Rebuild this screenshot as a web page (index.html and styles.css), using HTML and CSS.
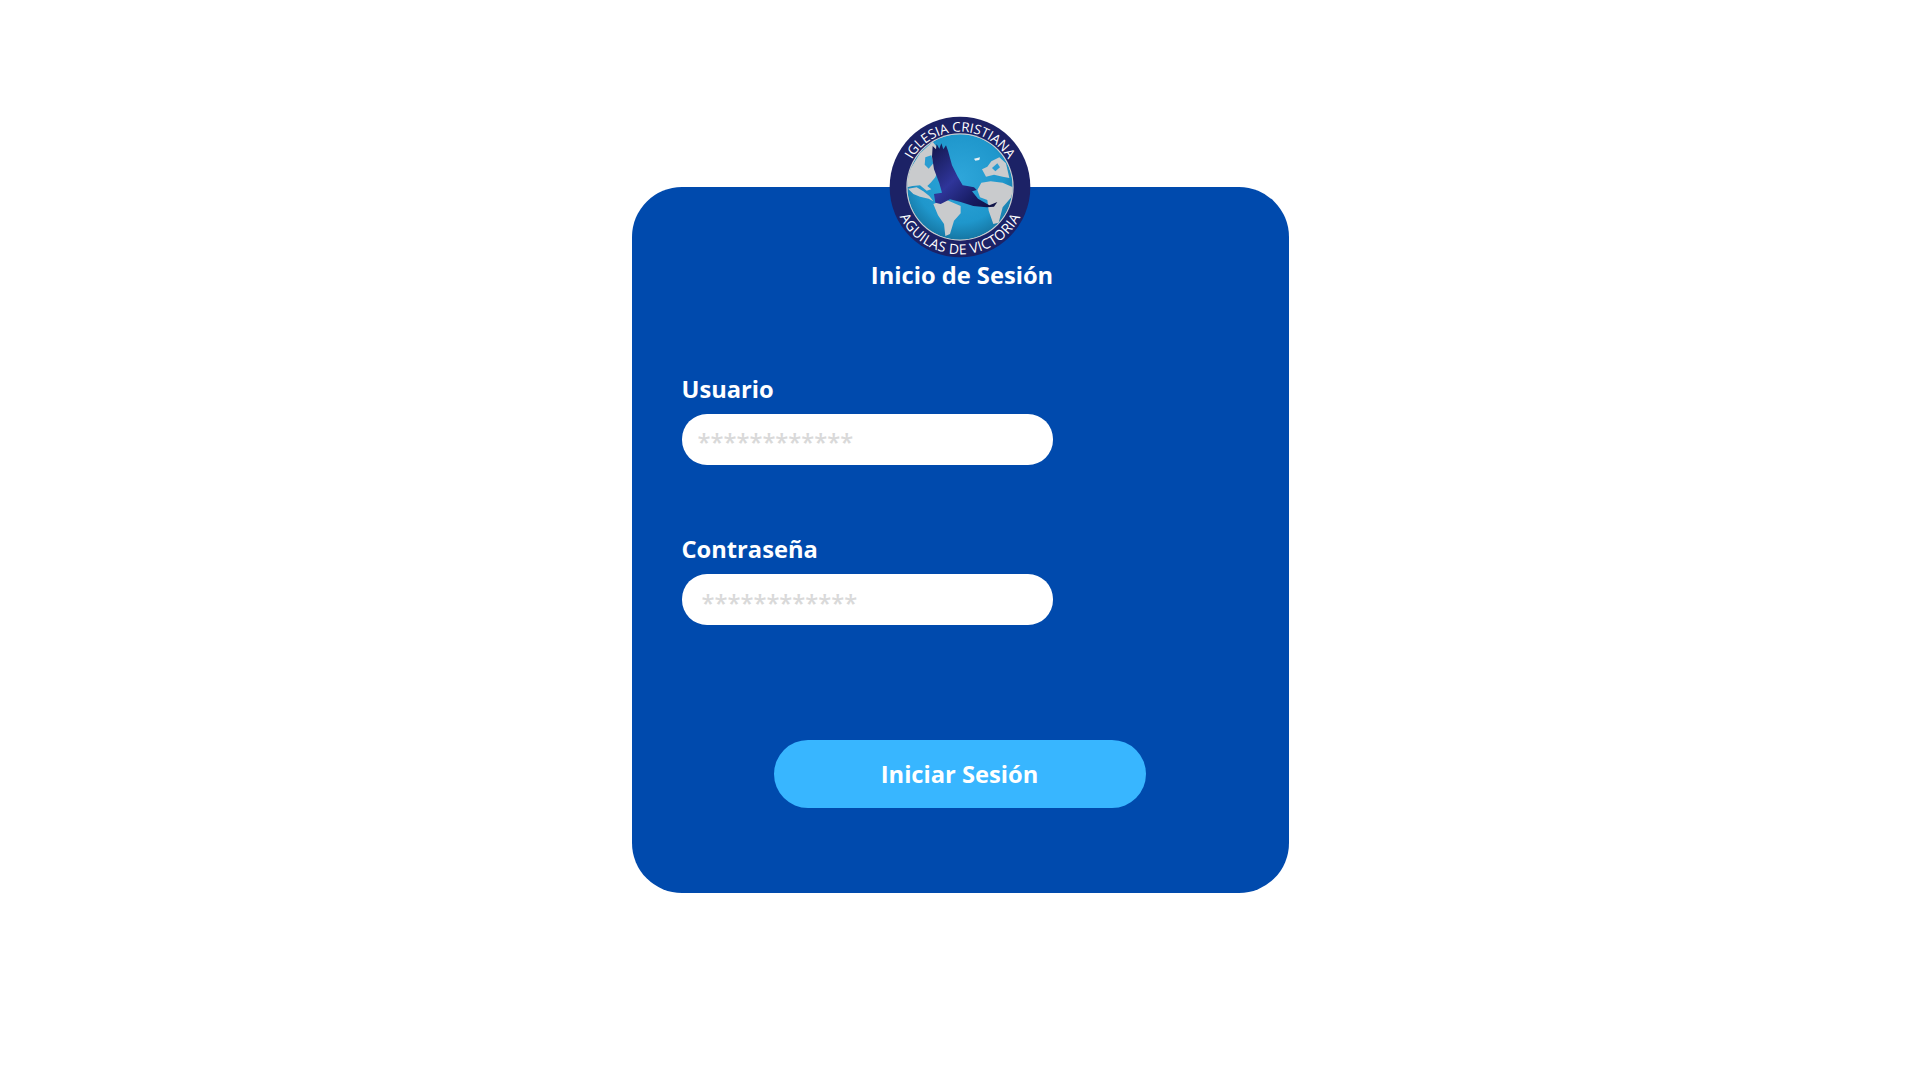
FILE: index.html
```html
<!DOCTYPE html>
<html lang="es">
<head>
<meta charset="utf-8">
<title>Inicio de Sesión</title>
<link rel="stylesheet" href="styles.css">
</head>
<body>
<main class="card">
  <svg class="logo" viewBox="57 48 426 426" aria-label="Iglesia Cristiana Águilas de Victoria">
    <defs>
      <radialGradient id="ocean" cx="0.5" cy="0.42" r="0.6">
        <stop offset="0" stop-color="#2ea6da"/>
        <stop offset="0.7" stop-color="#1f97cc"/>
        <stop offset="1" stop-color="#15739f"/>
      </radialGradient>
      <linearGradient id="eagle" x1="0" y1="0" x2="1" y2="1">
        <stop offset="0" stop-color="#12164a"/>
        <stop offset="0.45" stop-color="#2f359a"/>
        <stop offset="0.75" stop-color="#171c62"/>
        <stop offset="1" stop-color="#0e1240"/>
      </linearGradient>
      <path id="arcTop" d="M 104 261 A 166 166 0 0 1 436 261"/>
      <path id="arcBottom" d="M 68 261 A 202 202 0 0 0 472 261"/>
      <clipPath id="globe"><circle cx="270" cy="261" r="158"/></clipPath>
    </defs>
    <circle cx="270" cy="261" r="211" fill="#1c2266"/>
    <circle cx="270" cy="261" r="161" fill="#c9ccd0"/>
    <g clip-path="url(#globe)">
      <circle cx="270" cy="261" r="158" fill="url(#ocean)"/>
      <path class="land" d="M108 232 L122 205 L150 160 L188 125 L200 140 L206 205 L196 232 L182 248 L172 258 L184 268 L170 272 L150 256 L128 258 L108 262 Z"/>
      <path class="sea" d="M166 172 L184 166 L190 190 L176 206 L164 194 Z"/>
      <path class="land" d="M114 266 L140 262 L160 274 L178 288 L190 304 L176 296 L150 290 L130 282 Z"/>
      <path class="land" d="M190 312 L225 298 L272 318 L272 340 L252 362 L240 402 L226 408 L222 372 L204 346 Z"/>
      <path class="land" d="M322 270 L334 248 L362 244 L398 248 L430 262 L424 292 L398 322 L386 368 L370 372 L356 332 L352 300 L330 292 Z"/>
      <path class="land" d="M336 208 L352 200 L364 184 L388 172 L408 190 L418 234 L398 230 L372 224 L348 230 Z"/>
      <path class="sea" d="M366 204 L382 190 L390 202 L376 214 Z"/>
      <path class="ice" d="M312 176 L330 172 L328 180 L316 182 Z"/>
      <path class="eagle" d="M188 138 L198 148 L200 132 L208 146 L214 130 L220 148 L228 136 L234 152 L246 196 L262 228 L278 256 L292 258 L312 262 L320 270 L306 274 L324 296 L358 316 L382 306 L372 320 L350 322 L310 318 L272 306 L240 298 L212 312 L196 308 L192 282 L216 278 L208 250 L192 208 L186 170 Z"/>
    </g>
    <text class="ring-text ring-top"><textPath href="#arcTop" startOffset="50%" text-anchor="middle">IGLESIA CRISTIANA</textPath></text>
    <text class="ring-text ring-bottom"><textPath href="#arcBottom" startOffset="50%" text-anchor="middle">AGUILAS DE VICTORIA</textPath></text>
  </svg>
  <h1 class="title">Inicio de Sesión</h1>
  <form class="form">
    <div class="field">
      <label class="label" for="usuario">Usuario</label>
      <input class="input" id="usuario" type="text" placeholder="************">
    </div>
    <div class="field field-second">
      <label class="label" for="clave">Contraseña</label>
      <input class="input input-second" id="clave" type="text" placeholder="************">
    </div>
    <button class="submit" type="button">Iniciar Sesión</button>
  </form>
</main>
</body>
</html>
```
FILE: styles.css
```css
* { box-sizing: border-box; }
html, body { height: 100%; }
body {
  margin: 0;
  background: #fff;
  display: flex;
  align-items: center;
  justify-content: center;
  font-family: "Open Sans", "Liberation Sans", sans-serif;
}
.card {
  width: 657px;
  height: 706px;
  background: #004aad;
  border-radius: 50px;
  display: flex;
  flex-direction: column;
  color: #fff;
}
.logo {
  display: block;
  flex: none;
  width: 142px;
  height: 142px;
  margin: -71px auto 0;
}
.land { fill: #c9cbcd; }
.sea { fill: #2a9dd2; }
.ice { fill: #e8f0f4; }
.eagle { fill: url(#eagle); }
.ring-text { font-family: "Open Sans", sans-serif; font-weight: 500; fill: #fff; }
.ring-top { font-size: 40px; }
.ring-bottom { font-size: 42px; letter-spacing: 1px; }
.title {
  margin: 1px 0 0 4px;
  font-size: 23.7px;
  line-height: 32px;
  font-weight: 700;
  text-align: center;
}
.form {
  display: flex;
  flex-direction: column;
  padding: 82px 0 0 50px;
}
.field { display: flex; flex-direction: column; width: 371px; }
.field-second { margin-top: 68px; }
.label {
  font-size: 23.7px;
  line-height: 32px;
  font-weight: 700;
  margin-bottom: 9px;
}
.input {
  height: 51px;
  border: 0;
  border-radius: 25px;
  padding: 4px 16px 0;
  background: #fff;
  font: 600 23.7px "Open Sans", sans-serif;
  outline: none;
}
.input-second { padding-left: 20px; padding-top: 6px; }
.input::placeholder { color: #d9d9d9; opacity: 1; }
.submit {
  align-self: flex-start;
  width: 372px;
  height: 68px;
  margin: 115px 0 0 92px;
  border: 0;
  border-radius: 34px;
  background: #38b6ff;
  color: #fff;
  font: 700 23.7px "Open Sans", sans-serif;
}
```
